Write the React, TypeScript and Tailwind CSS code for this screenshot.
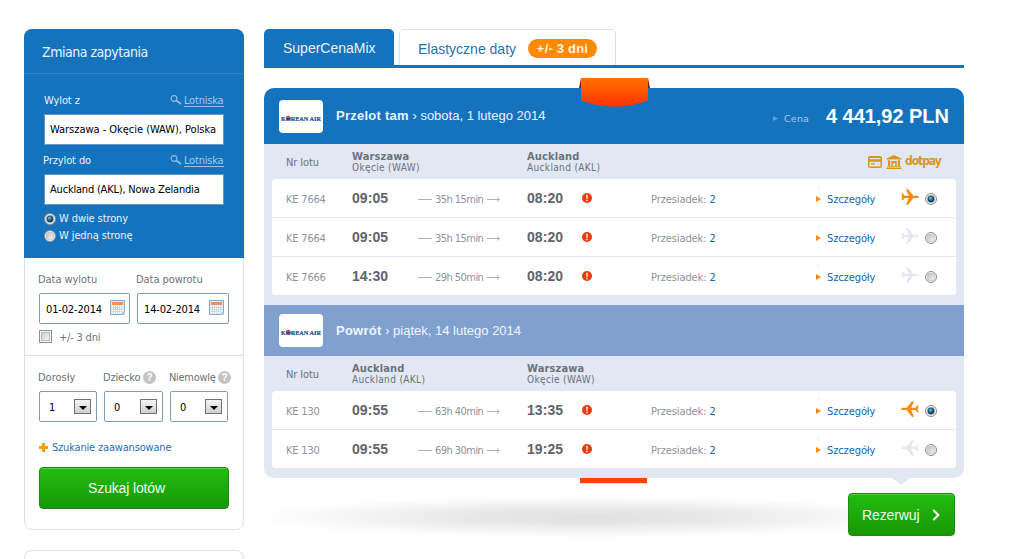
import React from "react";

const UI = "font-['DejaVu_Sans_Condensed','DejaVu_Sans',sans-serif] [font-stretch:condensed]";
const AR = "font-['Liberation_Sans',Arial,sans-serif] [font-stretch:normal]";

function Radio({ on = false }: { on?: boolean }) {
  return (
    <svg width="12" height="12" viewBox="0 0 12 12" className="block shrink-0">
      <defs>
        <linearGradient id="rg" x1="0" y1="0" x2="1" y2="1">
          <stop offset="0" stopColor="#bcbcbc" />
          <stop offset="1" stopColor="#f6f6f6" />
        </linearGradient>
        <radialGradient id="rd" cx="0.4" cy="0.35" r="0.65">
          <stop offset="0" stopColor="#7fd2f2" />
          <stop offset="0.5" stopColor="#1d6f9c" />
          <stop offset="1" stopColor="#0b2c47" />
        </radialGradient>
      </defs>
      <circle cx="6" cy="6" r="5.5" fill="#fbfbfb" stroke="#8b8c8f" />
      <circle cx="6" cy="6" r="4" fill="url(#rg)" stroke="#b9bcc0" strokeWidth="0.7" />
      {on && <circle cx="6" cy="6" r="3.1" fill="url(#rd)" stroke="#17374f" strokeWidth="0.6" />}
    </svg>
  );
}

function Plane({ on, back }: { on: boolean; back: boolean }) {
  return (
    <svg
      width="18"
      height="16"
      viewBox="0 0 18 16"
      className={back ? "-scale-x-100" : ""}
      fill={on ? "#fb8a12" : "#e3e8f2"}
    >
      <path d="M.4 4.600h1.300l2 2.200h4.100L5 .2h2.100l5.300 6.500h2.900c1.400 0 2.600.6 2.600 1.200s-1.200 1.200-2.600 1.200h-2.900L7.100 15.800H5l2.800-6.700H3.700l-2 2.200H.4l.9-3.300z" />
    </svg>
  );
}

function Calendar() {
  return (
    <svg width="15" height="15" viewBox="0 0 15 15" className="block shrink-0">
      <path d="M.5.5h14v10.800l-3.200 3.200H.5z" fill="#dce9f8" stroke="#8ba6d0" />
      <path d="M14.500 11.300v3.200h-3.200z" fill="#c6d6ec" stroke="#8ba6d0" strokeWidth=".6" />
      <path d="M2 2h11v3H2z" fill="#f09158" />
      <path d="M2 5.500h11v5.500l-2 2H2z" fill="#fff" />
      <path
        d="M2 7.500h11M2 9.500h11M2 11.500h9.500M3.500 5.500v7.500M5.500 5.500v7.500M7.500 5.500v7.500M9.500 5.500v7.500M11.500 5.500v6"
        stroke="#bccae2"
        strokeWidth=".7"
      />
    </svg>
  );
}

function Help() {
  return (
    <span
      className={`${AR} flex size-[13px] items-center justify-center rounded-full bg-[#c3c3c3] text-[10px] leading-none font-bold tracking-normal text-white`}
    >
      ?
    </span>
  );
}

function PlaceField({ label, value, cls, vcls }: { label: string; value: string; cls: string; vcls: string }) {
  return (
    <div className="h-[60px]">
      <div className="flex h-[21px] items-start pt-px leading-[14px]">
        <span className={cls}>{label}</span>
        <svg width="12" height="10" viewBox="0 0 12 10" className="mt-[1px] ml-auto" fill="none" stroke="#8fbbe3">
          <circle cx="4" cy="3.500" r="2.900" strokeWidth="1.200" />
          <path d="M6.300 5.500L11 9" strokeWidth="1.800" />
        </svg>
        <span className="ml-[2px] h-[13px] w-[40px] whitespace-nowrap border-b border-[#9cc1e8] tracking-[-0.2px] text-[#a5c9ee]">
          Lotniska
        </span>
      </div>
      <div className="flex h-[31px] items-center border border-[#6796c4] bg-white pt-px pl-[5px] text-black">
        <span className={`whitespace-nowrap ${vcls}`}>{value}</span>
      </div>
    </div>
  );
}

function DateField({ label, value, w }: { label: string; value: string; w: string }) {
  return (
    <div className={w}>
      <div className="-ml-px h-[21px] pt-px leading-[14px] tracking-[-0.05px] whitespace-nowrap">{label}</div>
      <div className="flex h-[31px] items-center justify-between rounded-[2px] border border-[#7f9db9] bg-white pr-[4px] pl-[6px] text-black">
        <span className="mt-[2px] tracking-[-0.15px] whitespace-nowrap">{value}</span>
        <span className="-mt-[2px]">
          <Calendar />
        </span>
      </div>
    </div>
  );
}

function CountField({ label, value, help, w, lw }: { label: string; value: string; help?: boolean; w: string; lw: string }) {
  return (
    <div className={w}>
      <div className={`-ml-px flex h-[21px] items-start justify-between pt-px leading-[14px] whitespace-nowrap ${lw}`}>
        {label}
        {help && <Help />}
      </div>
      <div className="flex h-[31px] items-center justify-between rounded-[2px] border border-[#7f9db9] bg-white pr-[5px] pl-[9px] text-black">
        <span className="mt-[2px]">{value}</span>
        <span className="flex h-[15px] w-[17px] items-end justify-center border border-[#707070] bg-linear-to-b from-[#f5f5f5] to-[#cfcfcf] pb-[3px]">
          <svg width="8" height="4" viewBox="0 0 8 4">
            <path d="M0 0h8L4 4z" />
          </svg>
        </span>
      </div>
    </div>
  );
}

function SearchPanel() {
  return (
    <div className="flex w-[220px] shrink-0 flex-col">
      <div className="h-[501px] rounded-[8px] border border-[#d9e2ec] text-[#6b727c]">
        <div className="-mx-px -mt-px h-[229px] rounded-t-[8px] bg-[#1572bc] text-[#eaf4ff]">
          <div className="h-[45px] border-b border-[#2b83cb] pl-[18px] text-[14px] leading-[46px] tracking-[-0.48px]">
            Zmiana zapytania
          </div>
          <div className="px-[20px] pt-[19px]">
            <PlaceField label="Wylot z" value="Warszawa - Okęcie (WAW), Polska" cls="tracking-[-0.1px]" vcls="tracking-[-0.03px]" />
            <PlaceField label="Przylot do" value="Auckland (AKL), Nowa Zelandia" cls="-ml-px tracking-[-0.1px]" vcls="tracking-[-0.2px]" />
            <div className="-mt-[3px] flex h-[17px] items-center gap-[3px]">
              <Radio on />
              <span className="tracking-[-0.1px]">W dwie strony</span>
            </div>
            <div className="flex h-[17px] items-center gap-[3px]">
              <Radio />
              <span className="tracking-[-0.1px]">W jedną stronę</span>
            </div>
          </div>
        </div>
        <div className="h-[98px] border-b border-[#d9e2ec] px-[14px] pt-[14px]">
          <div className="flex gap-[7px]">
            <DateField label="Data wylotu" value="01-02-2014" w="w-[91px]" />
            <DateField label="Data powrotu" value="14-02-2014" w="w-[92px]" />
          </div>
          <div className="mt-[6px] flex items-start gap-[7px]">
            <span className="flex size-[13px] items-center justify-center border border-[#8e8f8f] bg-[#f4f4f4]">
              <span className="size-[9px] border border-[#b8bcc2] bg-linear-to-br from-[#c8ccd2] to-[#f6f6f6]" />
            </span>
            <span className="mt-px leading-[14px] tracking-[-0.2px]">+/- 3 dni</span>
          </div>
        </div>
        <div className="px-[14px] pt-[14px]">
          <div className="flex gap-[7px]">
            <CountField label="Dorosły" value="1" w="w-[58px]" lw="w-[50px] tracking-[0px]" />
            <CountField label="Dziecko" value="0" help w="w-[59px]" lw="w-[53px] tracking-[-0.15px]" />
            <CountField label="Niemowlę" value="0" help w="w-[58px]" lw="w-[62px] tracking-[-0.3px]" />
          </div>
          <div className="mt-[18px] flex h-[14px] items-center gap-[4px] text-[#1f6fb5]">
            <svg width="9" height="9" viewBox="0 0 9 9" fill="#f79a1b">
              <path d="M3 0h3v3h3v3H6v3H3V6H0V3h3z" />
            </svg>
            <span className="mt-[2px] tracking-[-0.18px]">Szukanie zaawansowane</span>
          </div>
          <button
            className={`${AR} mt-[13px] flex h-[42px] w-[190px] items-center justify-center rounded-[4px] border border-[#1a8a12] bg-linear-to-b from-[#22bd0e] to-[#199708] pr-[15px] text-[14px] tracking-[-0.15px] text-[#eefbe9] shadow-[inset_0_1px_0_#4fd03c]`}
          >
            Szukaj lotów
          </button>
        </div>
      </div>
      <div className="mt-[20px] h-[9px] rounded-t-[8px] border border-b-0 border-[#d9e2ec]" />
    </div>
  );
}

function KoreanAir() {
  return (
    <div className="flex h-[33px] w-[44px] shrink-0 items-center justify-center rounded-[4px] bg-white">
      <svg width="44" height="12" viewBox="0 0 44 12" className="mt-[2px] block overflow-visible">
        <text
          x="2"
          y="8.500"
          textLength="40"
          lengthAdjust="spacingAndGlyphs"
          fontFamily="Liberation Serif"
          fontWeight="700"
          fontSize="6.500"
          fill="#1a4a94"
          stroke="#1a4a94"
          strokeWidth=".2"
        >
          KOREAN AIR
        </text>
        <circle cx="9.300" cy="6" r="2.300" fill="#de3a42" />
        <path d="M7 6.600c1.400-1.400 2.600.7 4.600-.8-.1 1.500-1 2.500-2.300 2.500-1.200 0-2.100-.7-2.300-1.700z" fill="#1a4a94" />
      </svg>
    </div>
  );
}

type City = { name: string; port: string };

function ColumnHead({ from, to, pay }: { from: City; to: City; pay?: boolean }) {
  return (
    <div className="flex h-[35px] items-center pr-[22px] pl-[22px] text-[#6b727c]">
      <span className="mt-[2px] w-[66px] tracking-[-0.1px]">Nr lotu</span>
      {[from, to].map((c) => (
        <div key={c.name} className="mt-[2px] w-[175px] whitespace-nowrap">
          <div className="h-[11px] leading-[11px] font-bold tracking-[0.15px]">{c.name}</div>
          <div className="h-[12px] text-[10px] leading-[12px] tracking-[0.35px]">{c.port}</div>
        </div>
      ))}
      {pay && (
        <div className="ml-auto flex items-center">
          <svg width="34" height="14" viewBox="0 0 34 14" fill="#d8951f">
            <path
              fillRule="evenodd"
              d="M2 1h10a2 2 0 0 1 2 2v8a2 2 0 0 1-2 2H2a2 2 0 0 1-2-2V3a2 2 0 0 1 2-2zM1.500 3v1.200h11V3zM1.500 6.800v4.700h11V6.800zM3 8.200h4v1.200H3z"
            />
            <path d="M18.500 3.500L26 0l7.500 3.500v1h-15zM20 5.300h2.200v5.700H20zM29.800 5.300H32v5.700h-2.200zM23.300 6h5.400v5h-1.500V8.200h-2.400V11h-1.500zM19 11.200h14v1H19zM18.500 12.800h15V14h-15z" />
          </svg>
          <span className="-mt-[2px] ml-[3px] w-[37px] text-[12px] leading-[14px] font-bold tracking-[-1.05px] whitespace-nowrap text-[#d8951f]">
            dotpay
          </span>
        </div>
      )}
    </div>
  );
}

type Flight = { no: string; dep: string; dur: string; arr: string; on?: boolean };

function Rows({ flights, back = false }: { flights: Flight[]; back?: boolean }) {
  return (
    <div className="mx-[8px] overflow-hidden rounded-[4px] bg-white text-[#8e939b]">
      {flights.map((f, i) => (
        <div
          key={i}
          className="grid h-[39px] grid-cols-[66px_66px_109px_55px_69px_165px_11px_74px_24px_auto] items-center border-b border-[#e2e8f3] pl-[14px] whitespace-nowrap last:h-[38px] last:border-0"
        >
          <span className="mt-[3px] tracking-[-0.2px]">{f.no}</span>
          <span className={`${AR} text-[14px] font-bold tracking-[0.05px] text-[#5d646d]`}>{f.dep}</span>
          <span className="mt-[3px] flex items-center">
            <span className="mr-[3px] h-px w-[14px] bg-[#aeb2b8]" />
            <span className="w-[49px] tracking-[-0.55px]">{f.dur}</span>
            <svg width="13" height="5" viewBox="0 0 13 5" className="ml-[3px]" fill="none" stroke="#a4a8ae">
              <path d="M0 2.500h12.500M10 .3l2.300 2.200L10 4.700" strokeWidth=".9" />
            </svg>
          </span>
          <span className={`${AR} text-[14px] font-bold tracking-[0.05px] text-[#5d646d]`}>{f.arr}</span>
          <svg width="10" height="10" viewBox="0 0 10 10">
            <circle cx="5" cy="5" r="5" fill="#ee3a0e" />
            <path d="M4.200 1.800h1.600L5.500 6h-1zM4.300 6.800h1.400v1.400H4.300z" fill="#fff" />
          </svg>
          <span className="mt-[3px] tracking-[-0.1px]">
            Przesiadek: <span className="text-[#1168b3]">2</span>
          </span>
          <svg width="5" height="20" viewBox="0 0 5 20" className="-mt-[3px]">
            <path d="M0 9l5 3-5 3z" fill="#fb8a12" />
            <path d="M2 0h1v1H2z" fill="#c9cdd6" />
          </svg>
          <span className="mt-[3px] tracking-[-0.1px] text-[#1168b3]">Szczegóły</span>
          <span className="-mt-[3px]">
            <Plane on={!!f.on} back={back} />
          </span>
          <span className="mt-[1px]">
            <Radio on={f.on} />
          </span>
        </div>
      ))}
    </div>
  );
}

export default function App() {
  return (
    <div className={`${UI} flex h-[559px] w-[1019px] gap-[20px] overflow-hidden bg-white pt-[29px] pl-[24px] text-[11px] leading-[14px]`}>
      <SearchPanel />
      <main className="w-[700px]">
        <nav className={`${AR} flex h-[39px] border-b-3 border-[#1572bc] text-[14px]`}>
          <div className="h-[36px] w-[130px] rounded-t-[5px] bg-[#1572bc] pl-[19px] leading-[39px] text-[#eaf4ff]">SuperCenaMix</div>
          <div className="ml-[5px] flex h-[36px] w-[217px] items-center rounded-t-[5px] border border-b-0 border-[#d9e2ec] pt-[2px] pl-[18px] text-[#2672b5]">
            <span className="w-[110px]">Elastyczne daty</span>
            <span className="flex h-[19px] w-[69px] items-center justify-center rounded-full bg-[#ff8a00] text-[13px] font-bold tracking-[0.2px] text-[#fff3df]">
              +/- 3 dni
            </span>
          </div>
        </nav>
        <section className="relative mt-[20px] h-[390px] rounded-[10px] bg-[#e2e8f3]">
          <div className="flex h-[56px] items-center rounded-t-[10px] bg-[#1572bc] pr-[15px] pl-[15px] text-[#eaf4ff]">
            <div className="mt-[1px]">
              <KoreanAir />
            </div>
            <span className={`${AR} ml-[13px] text-[13px]`}>
              <b className="tracking-[0.25px]">Przelot tam</b> › sobota, 1 lutego 2014
            </span>
            <svg width="5" height="5" viewBox="0 0 5 5" className="mt-[4px] ml-auto">
              <path d="M0 0l5 2.500L0 5z" fill="#5d9fd6" />
            </svg>
            <span className="mt-[5px] ml-[5px] w-[43px] pl-px font-['DejaVu_Sans'] text-[9.500px] tracking-[0.2px] text-[#a5cbee] [font-stretch:normal]">
              Cena
            </span>
            <span className={`${AR} w-[123px] text-[20px] font-bold tracking-[-0.05px] whitespace-nowrap text-white`}>4 441,92 PLN</span>
          </div>
          <ColumnHead pay from={{ name: "Warszawa", port: "Okęcie (WAW)" }} to={{ name: "Auckland", port: "Auckland (AKL)" }} />
          <Rows
            flights={[
              { no: "KE 7664", dep: "09:05", dur: "35h 15min", arr: "08:20", on: true },
              { no: "KE 7664", dep: "09:05", dur: "35h 15min", arr: "08:20" },
              { no: "KE 7666", dep: "14:30", dur: "29h 50min", arr: "08:20" },
            ]}
          />
          <div className="mt-[10px] flex h-[51px] items-center bg-[#80a0ce] pl-[15px] text-[#f2f7ff]">
            <KoreanAir />
            <span className={`${AR} mt-px ml-[13px] text-[13px]`}>
              <b className="tracking-[0.25px]">Powrót</b> › piątek, 14 lutego 2014
            </span>
          </div>
          <ColumnHead from={{ name: "Auckland", port: "Auckland (AKL)" }} to={{ name: "Warszawa", port: "Okęcie (WAW)" }} />
          <Rows
            back
            flights={[
              { no: "KE 130", dep: "09:55", dur: "63h 40min", arr: "13:35", on: true },
              { no: "KE 130", dep: "09:55", dur: "69h 30min", arr: "19:25" },
            ]}
          />
          <svg width="72" height="32" viewBox="0 0 72 32" className="absolute top-[-10px] left-[315px]">
            <defs>
              <linearGradient id="ribbon" x1="0" y1="0" x2="0" y2="1">
                <stop offset="0" stopColor="#ff7200" />
                <stop offset="1" stopColor="#ff3200" />
              </linearGradient>
            </defs>
            <path d="M2 0v10H0zM69 0v10h2z" fill="#8e1a06" />
            <path d="M2 0h67v22.500Q35.500 35 2 22.500z" fill="url(#ribbon)" />
          </svg>
          <div className="absolute top-[390px] left-[316px] h-[5px] w-[67px] bg-[#fc4302] shadow-[0_1px_1px_#fde3d8]" />
          <svg width="18" height="7" viewBox="0 0 18 7" className="absolute top-[390px] left-[628px]">
            <path d="M0 0h18L9 7z" fill="#e2e8f3" />
          </svg>
        </section>
        <div className="flex h-[81px] items-start justify-end bg-[radial-gradient(ellipse_340px_21px_at_325px_39px,#e1e1e3_0%,#e7e7e8_35%,#f5f5f5_70%,#ffffff_100%)] pt-[15px] pr-[9px]">
          <button
            className={`${AR} flex h-[43px] w-[107px] items-center justify-between rounded-[4px] border border-[#1a8a12] bg-linear-to-b from-[#22bd0e] to-[#199708] pr-[14px] pl-[13px] text-[14px] tracking-[-0.1px] text-[#eefbe9] shadow-[inset_0_1px_0_#4fd03c]`}
          >
            Rezerwuj
            <svg width="8" height="12" viewBox="0 0 8 12" fill="none" stroke="#f2fff0" strokeWidth="2.200">
              <path d="M1.300 1l5 5-5 5" />
            </svg>
          </button>
        </div>
      </main>
    </div>
  );
}
